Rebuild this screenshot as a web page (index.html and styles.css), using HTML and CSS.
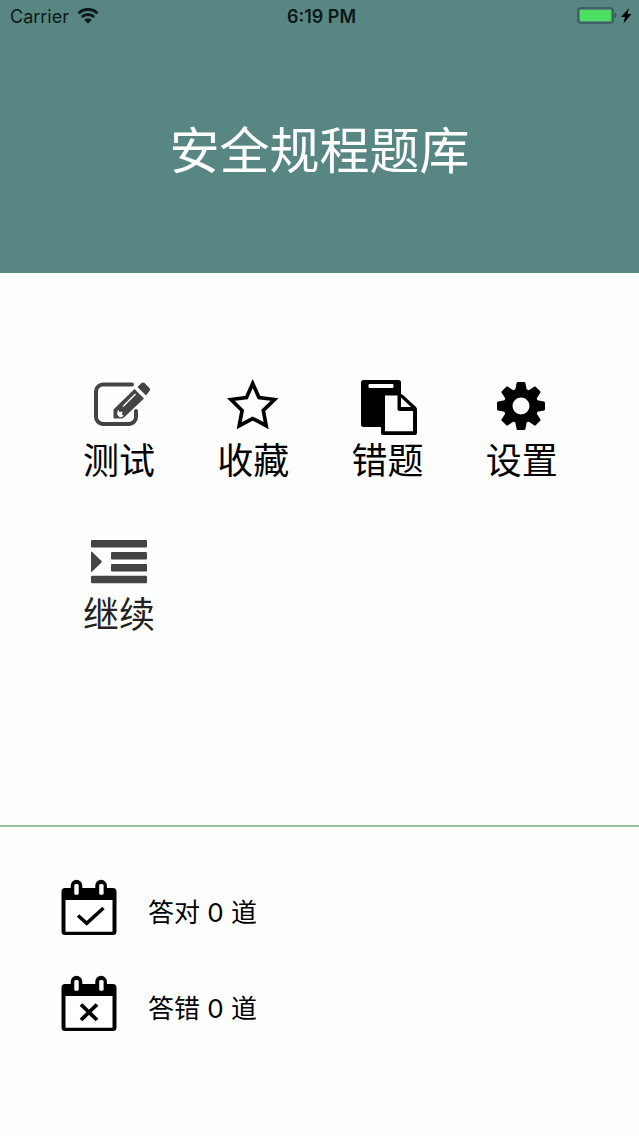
FILE: index.html
```html
<!doctype html>
<html lang="zh">
<head>
  <meta charset="UTF-8">
  <meta name="viewport" content="width=device-width, initial-scale=1.0">
  <title>安全规程题库</title>
  <link rel="stylesheet" href="styles.css">
</head>
<body>
  <header class="header">
    <div class="status-bar">
      <div class="status-bar--left">
        <span>Carrier</span>
        <svg class="wifi" viewBox="0 0 22 16" aria-hidden="true">
          <path d="M1.500 5.300a13.500 13.500 0 0 1 19 0M4.800 9a9 9 0 0 1 12.400 0" fill="none" stroke="currentColor" stroke-width="3"/>
          <path d="M11 15.500l-3.800-3.800a5.500 5.500 0 0 1 7.600 0z" fill="currentColor"/>
        </svg>
      </div>
      <span class="status-bar--time">6:19 PM</span>
      <div class="status-bar--right">
        <svg class="battery" viewBox="0 0 56 18" aria-hidden="true">
          <rect x="1" y="1" width="35" height="15" rx="3" fill="none" stroke="#36585a" stroke-width="1.500"/>
          <rect x="3" y="3" width="31" height="11" rx="1" fill="#4cdf62"/>
          <path d="M38 6q2 2.500 0 5z" fill="#36585a" stroke="#36585a"/>
          <path d="M52 1l-8 9h4l-1.500 6.500 8-9.500h-4z" fill="#000"/>
        </svg>
      </div>
    </div>
    <h1>安全规程题库</h1>
  </header>

  <main class="menu">
    <button type="button" class="menu--item">
      <svg class="icon icon__gray" viewBox="0 0 56 56" aria-hidden="true">
        <path d="M41 4.500H12a7 7 0 0 0-7 7V37a7 7 0 0 0 7 7h26a7 7 0 0 0 7-7v-6" fill="none" stroke="currentColor" stroke-width="4" stroke-linecap="round"/>
        <path d="M46.500 7l4-4q1.500-1.200 3 0l5 5q1.300 1.500 0 3L55 15.500z" fill="currentColor"/>
        <path d="M43.500 9l9.500 9.500-20 19q-1 1-2.500 1h-7q-1 0-1-1v-7q0-1 1-2z" fill="currentColor"/>
        <path d="M44.500 14L32 26.500" stroke="#fff" stroke-width="1.500"/>
        <path d="M27 29.500l1.500 2.500 3-.5-.5 3 2 1.500-4 1.500-3-3z" fill="#fff"/>
      </svg>
      <span>测试</span>
    </button>
    <button type="button" class="menu--item">
      <svg class="icon" viewBox="0 0 56 56" aria-hidden="true">
        <path d="M27.700 3.500l6.300 14 15.500 2L38.300 30.500l2.900 15.200-13.500-7.200-13.500 7.200 2.900-15.200L6 19.500l15.500-2z" fill="none" stroke="currentColor" stroke-width="3.700"/>
      </svg>
      <span>收藏</span>
    </button>
    <button type="button" class="menu--item">
      <svg class="icon" viewBox="0 0 56 56" aria-hidden="true">
        <rect x="1" y="0" width="40" height="47" rx="2.500" fill="currentColor"/>
        <rect x="8.500" y="4" width="25" height="4" rx="1" fill="#fff"/>
        <path d="M21 14h20l2 1 13 12q1 1 1 3v23q0 2-2 2H23q-2 0-2-2z" fill="currentColor"/>
        <path d="M25 15.500h12.500V29q0 2 2 2H53v20.300H25z" fill="#fff"/>
        <path d="M41 17.500V27h10z" fill="#fff"/>
      </svg>
      <span>错题</span>
    </button>
    <button type="button" class="menu--item">
      <svg class="icon" viewBox="0 0 56 56" aria-hidden="true">
        <defs>
          <path id="tooth" d="M-6-15l1.600-8q.2-1 1.200-1h6.400q1 0 1.200 1l1.600 8z"/>
        </defs>
        <g transform="translate(27 26)" fill="currentColor">
          <circle r="13" fill="none" stroke="currentColor" stroke-width="9"/>
          <use href="#tooth"/>
          <use href="#tooth" transform="rotate(45)"/>
          <use href="#tooth" transform="rotate(90)"/>
          <use href="#tooth" transform="rotate(135)"/>
          <use href="#tooth" transform="rotate(180)"/>
          <use href="#tooth" transform="rotate(225)"/>
          <use href="#tooth" transform="rotate(270)"/>
          <use href="#tooth" transform="rotate(315)"/>
        </g>
      </svg>
      <span>设置</span>
    </button>
    <button type="button" class="menu--item menu--item__soft">
      <svg class="icon icon__gray" viewBox="0 0 56 56" aria-hidden="true">
        <g fill="currentColor">
          <rect x="0" y="6" width="56" height="7.500" rx="1"/>
          <rect x="20" y="18" width="36" height="7.500" rx="1"/>
          <rect x="20" y="30" width="36" height="7.500" rx="1"/>
          <rect x="0" y="41.700" width="56" height="7.500" rx="1"/>
          <path d="M0 18.500q0-1.500 1.200-.5l9.300 9q.8.800 0 1.600l-9.300 9q-1.200 1-1.200-.5z"/>
        </g>
      </svg>
      <span>继续</span>
    </button>
  </main>

  <footer class="score">
    <div class="score--item">
      <svg class="icon" viewBox="0 0 56 56" aria-hidden="true">
        <path d="M4 8h5.700V5.500a5.800 5.800 0 0 1 11.600 0V8h13V5.500a5.800 5.800 0 0 1 11.600 0V8H52q3.500 0 3.500 3.500v40q0 3.500-3.500 3.500H4Q.5 55 .5 51.500v-40Q.5 8 4 8z" fill="currentColor"/>
        <path d="M4.500 20h47v31.700h-47z" fill="#fff"/>
        <rect x="13.300" y="4" width="4.400" height="10.700" rx="1.500" fill="#fff"/>
        <rect x="38.200" y="4" width="4.400" height="10.700" rx="1.500" fill="#fff"/>
        <path d="M17 35.500l8.700 7.800L42.500 28" fill="none" stroke="currentColor" stroke-width="3.500"/>
      </svg>
      <span>答对 0 道</span>
    </div>
    <div class="score--item">
      <svg class="icon" viewBox="0 0 56 56" aria-hidden="true">
        <path d="M4 8h5.700V5.500a5.800 5.800 0 0 1 11.600 0V8h13V5.500a5.800 5.800 0 0 1 11.600 0V8H52q3.500 0 3.500 3.500v40q0 3.500-3.500 3.500H4Q.5 55 .5 51.500v-40Q.5 8 4 8z" fill="currentColor"/>
        <path d="M4.500 20h47v31.700h-47z" fill="#fff"/>
        <rect x="13.300" y="4" width="4.400" height="10.700" rx="1.500" fill="#fff"/>
        <rect x="38.200" y="4" width="4.400" height="10.700" rx="1.500" fill="#fff"/>
        <path d="M20 28.500l16 15.500M36 28.500L20 44" fill="none" stroke="currentColor" stroke-width="3.800"/>
      </svg>
      <span>答错 0 道</span>
    </div>
  </footer>
</body>
</html>
```
FILE: styles.css
```css
* {
  box-sizing: border-box;
}

body {
  display: flex;
  flex-direction: column;
  min-height: 100vh;
  margin: 0;
  background-color: #fefefe;
  color: #000;
  font-family: Inter, "Noto Sans CJK SC", sans-serif;
}

.header {
  padding-bottom: 86px;
  background-color: #578683;
}

.header > h1 {
  margin: 83px 0 0;
  color: #fff;
  font-size: 50px;
  font-weight: 400;
  line-height: 72px;
  text-align: center;
}

.status-bar {
  display: grid;
  grid-template-columns: 1fr auto 1fr;
  align-items: center;
  height: 32px;
  padding: 0 6px 0 10px;
  color: #0b1817;
  font-size: 18px;
}

.status-bar--left {
  display: flex;
  align-items: center;
  gap: 8px;
}

.status-bar--time {
  font-weight: 600;
}

.status-bar--right {
  display: flex;
  justify-content: flex-end;
}

.wifi {
  width: 22px;
  height: 16px;
}

.battery {
  width: 56px;
  height: 18px;
}

.menu {
  display: grid;
  flex: 1;
  grid-template-columns: repeat(4, 1fr);
  align-content: start;
  row-gap: 48px;
  padding: 107px 50px 50px 52px;
}

.menu--item {
  display: flex;
  flex-direction: column;
  align-items: center;
  padding: 0;
  border: none;
  background: none;
  color: #000;
  font-family: inherit;
  font-size: 36px;
  font-weight: 400;
  line-height: 50px;
  cursor: pointer;
}

.menu--item__soft {
  color: #222;
}

.icon {
  flex: none;
  width: 56px;
  height: 56px;
  overflow: visible;
}

.icon__gray {
  color: #444;
}

.score {
  display: flex;
  flex-direction: column;
  gap: 40px;
  padding: 53px 61px 104px;
  border-top: 2px solid #97c09a;
}

.score--item {
  display: flex;
  align-items: flex-end;
  gap: 31px;
  font-size: 26px;
  font-weight: 400;
  line-height: 46px;
}
```
